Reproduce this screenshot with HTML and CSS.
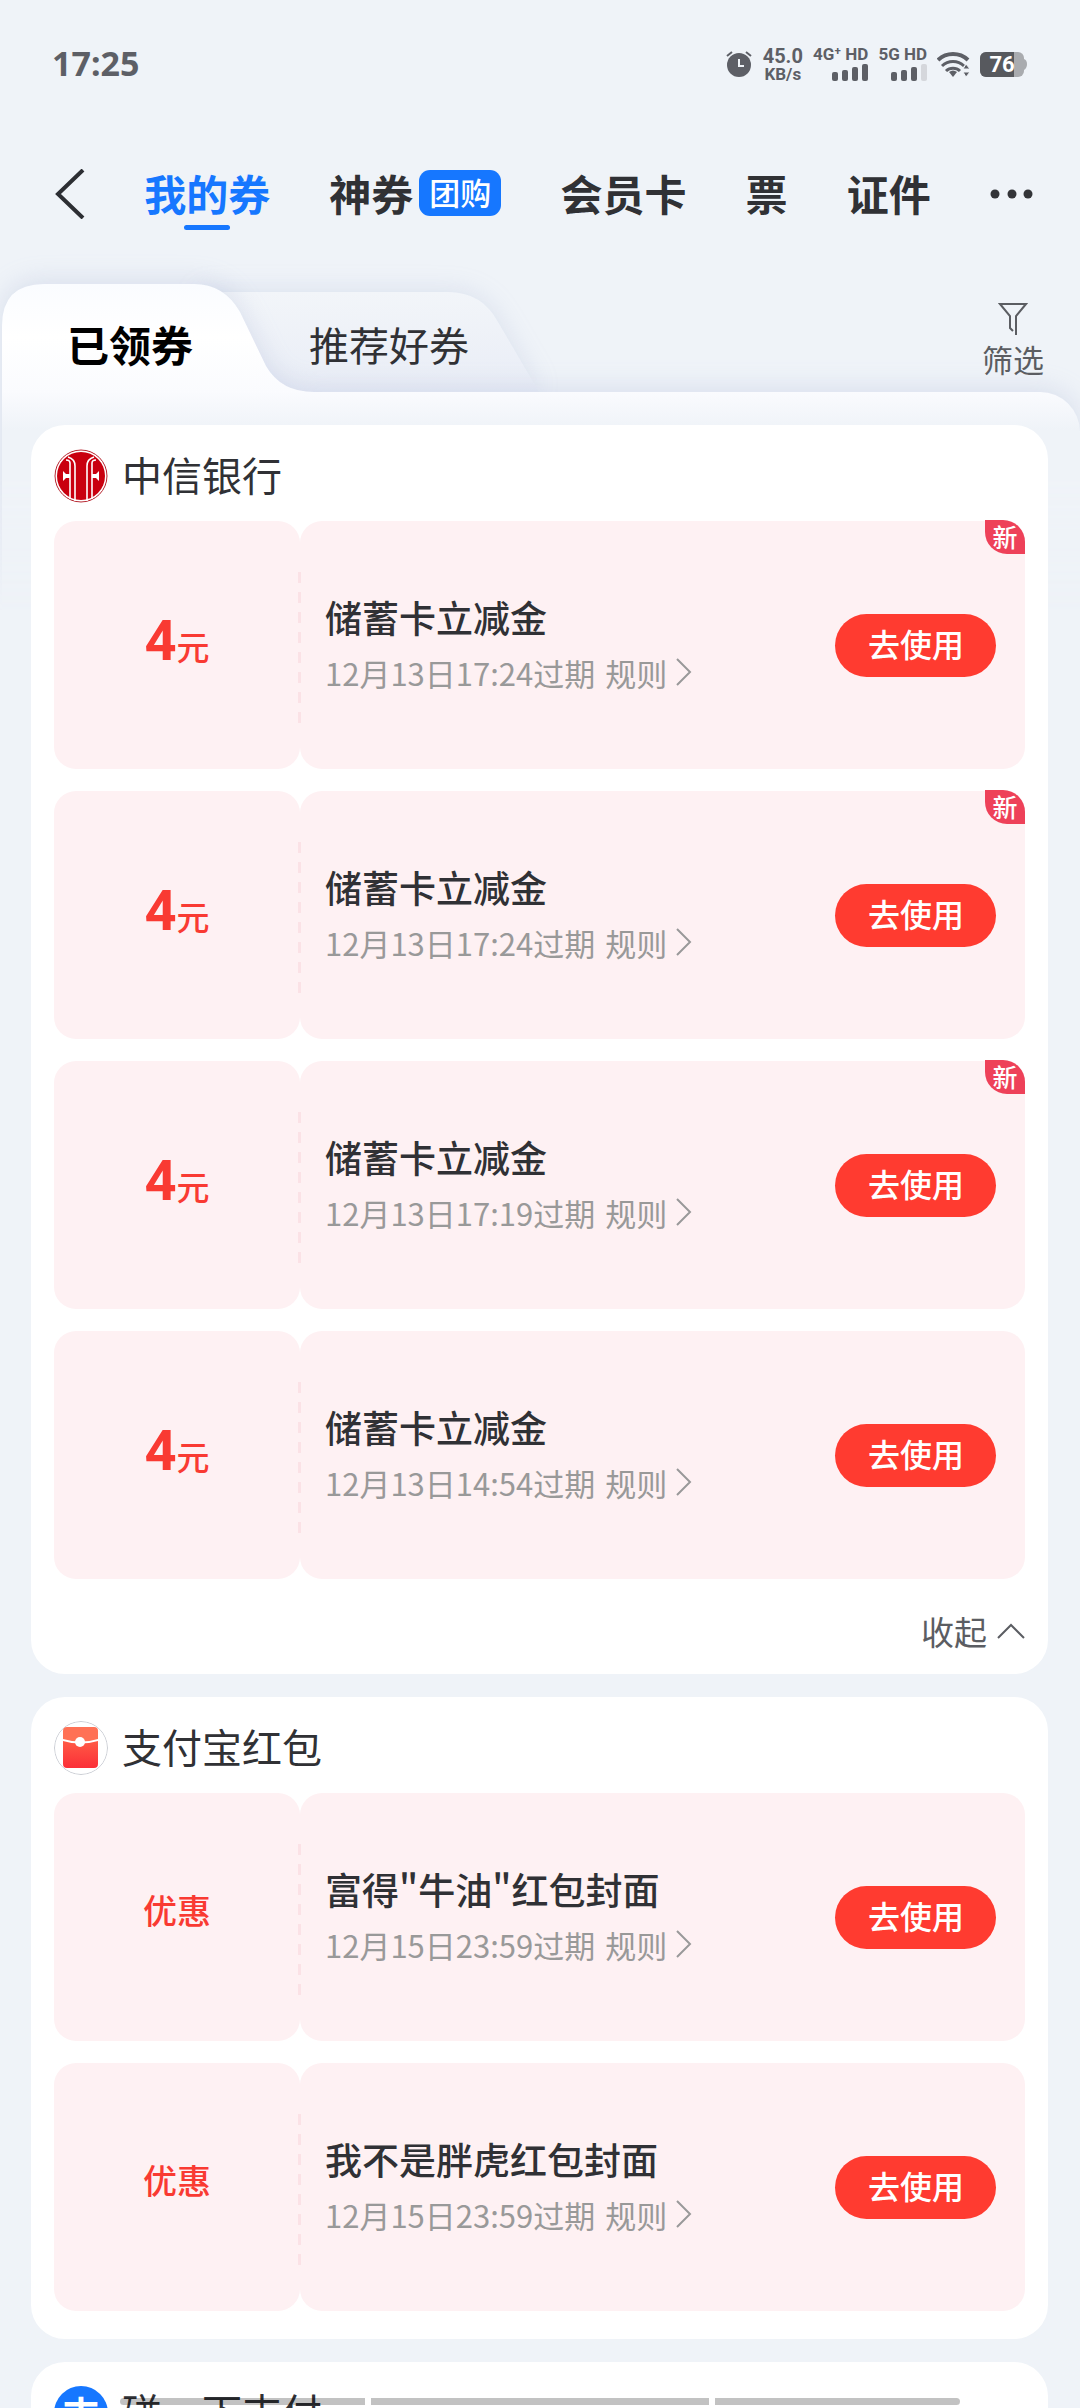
FILE: index.html
```html
<!DOCTYPE html>
<html lang="zh-CN">
<head>
  <meta charset="UTF-8">
  <meta name="viewport" content="width=device-width, initial-scale=1">
  <title>我的券</title>
  <link rel="stylesheet" href="styles.css">
</head>
<body>
  <svg class="defs" width="0" height="0" aria-hidden="true">
    <symbol id="arrow-right" viewBox="0 0 16 30">
      <path d="M1 2l13 13L1 28" fill="none" stroke="currentColor" stroke-width="2"/>
    </symbol>
  </svg>

  <div class="screen">
    <div class="status-bar">
      <span class="clock">17:25</span>
      <div class="status-icons">
        <svg class="alarm" width="27" height="26" viewBox="0 0 27 26">
          <circle cx="13" cy="14" r="12" fill="#5d5f66"/>
          <path d="M1 5l5-4M20 1l5 4" stroke="#5d5f66" stroke-width="2"/>
          <path d="M13 8v7h5" fill="none" stroke="#eff3f8" stroke-width="2"/>
        </svg>
        <div class="net-speed"><span class="speed">45.0</span><span>KB/s</span></div>
        <div class="signal">
          <span>4G⁺ HD</span>
          <svg width="36" height="17" viewBox="0 0 36 17" fill="#5d5f66">
            <rect x="0" y="8" width="6" height="9" rx="2"/>
            <rect x="10" y="6" width="6" height="11" rx="2"/>
            <rect x="20" y="3" width="6" height="14" rx="2"/>
            <rect x="30" y="0" width="6" height="17" rx="2"/>
          </svg>
        </div>
        <div class="signal">
          <span>5G HD</span>
          <svg width="36" height="17" viewBox="0 0 36 17" fill="#5d5f66">
            <rect x="0" y="8" width="6" height="9" rx="2"/>
            <rect x="10" y="6" width="6" height="11" rx="2"/>
            <rect x="20" y="3" width="6" height="14" rx="2"/>
            <rect x="30" y="0" width="6" height="17" rx="2" fill="#d5d7dc"/>
          </svg>
        </div>
        <svg class="wifi" width="33" height="26" viewBox="0 0 33 26">
          <g fill="none" stroke="#5d5f66" stroke-width="4">
            <path d="M1 9a22 22 0 0 1 30 0"/>
            <path d="M5 15a16 16 0 0 1 22 0" stroke-width="3"/>
            <path d="M9 20a10 10 0 0 1 14 0" stroke-width="3"/>
          </g>
          <path d="M12 21q4-3 8 0l-4 5z" fill="#5d5f66"/>
          <path d="M29 13l4 5h-7zM29 26l4-5h-7z" fill="#5d5f66" stroke="#eff3f8" stroke-width="1"/>
        </svg>
        <svg class="battery" width="47" height="25" viewBox="0 0 47 25">
          <rect x="0" y="0" width="44" height="25" rx="6" fill="#a9abaf"/>
          <path d="M6 0h28v25H6a6 6 0 0 1-6-6V6a6 6 0 0 1 6-6z" fill="#57595e"/>
          <path d="M44 7q3 1 3 5t-3 6z" fill="#a9abaf"/>
          <text x="22" y="20" text-anchor="middle" class="battery-text">76</text>
        </svg>
      </div>
    </div>

    <nav class="nav">
      <button class="icon-btn" aria-label="返回">
        <svg width="30" height="50" viewBox="0 0 30 50">
          <path d="M28 1L3 25l25 24" fill="none" stroke="#2c2e33" stroke-width="4"/>
        </svg>
      </button>
      <a class="nav-link active" href="#">我的券</a>
      <a class="nav-link" href="#">神券<span class="nav-tag">团购</span></a>
      <a class="nav-link" href="#">会员卡</a>
      <a class="nav-link" href="#">票</a>
      <a class="nav-link" href="#">证件</a>
      <button class="icon-btn" aria-label="更多">
        <svg width="43" height="10" viewBox="0 0 43 10" fill="#333438">
          <circle cx="5" cy="5" r="4.5"/><circle cx="22" cy="5" r="4.5"/><circle cx="38" cy="5" r="4.5"/>
        </svg>
      </button>
    </nav>

    <div class="tabs">
      <svg class="tab-back" width="560" height="108" viewBox="0 0 560 108" aria-hidden="true">
        <defs>
          <linearGradient id="backFill" x1="0" y1="0" x2="0" y2="1">
            <stop offset="0" stop-color="#f2f5f9"/>
            <stop offset="1" stop-color="#e9edf6"/>
          </linearGradient>
        </defs>
        <path d="M200 8H448Q482 8 498 38L539 108H200z" fill="url(#backFill)"/>
      </svg>
      <div class="tab-front" aria-hidden="true">
        <svg width="330" height="109" viewBox="0 0 330 109">
          <defs>
            <linearGradient id="frontFill" x1="0" y1="0" x2="0" y2="1">
              <stop offset="0" stop-color="#fafcff"/>
              <stop offset=".5" stop-color="#ffffff"/>
              <stop offset="1" stop-color="#fafbfe"/>
            </linearGradient>
          </defs>
          <path d="M0 109V42Q0 0 42 0H192Q222 0 238 28L264 82Q279 108 312 108V109z" fill="url(#frontFill)"/>
        </svg>
        <div class="tab-sheet"></div>
      </div>
      <button class="tab current">已领券</button>
      <button class="tab">推荐好券</button>
      <button class="filter">
        <svg width="30" height="34" viewBox="0 0 30 34">
          <path d="M18 33V14L28 2H2l10 12v12l3 3" fill="none" stroke="#5b5d62" stroke-width="2"/>
        </svg>
        筛选
      </button>
    </div>

    <main class="list">
      <section class="card">
        <header class="card-head">
          <svg class="logo" width="54" height="54" viewBox="0 0 54 54">
            <circle cx="27" cy="27" r="26" fill="#fff" stroke="#b5222c" stroke-width="1"/>
            <circle cx="27" cy="27" r="24" fill="#c9000f"/>
            <g fill="none" stroke="#fff" stroke-width="1.6">
              <path d="M16 50V14q0-3-4-3"/>
              <path d="M21 52V17q0-7-7-9"/>
              <path d="M38 50V14q0-3 4-3"/>
              <path d="M33 52V17q0-7 7-9"/>
            </g>
            <path d="M9 22l3 3h4v4h-4l-3 3zM45 22l-3 3h-4v4h4l3 3z" fill="#fff"/>
          </svg>
          <h2>中信银行</h2>
        </header>
        <div class="coupons">
          <article class="coupon">
            <div class="coupon-value amount"><p><b>4</b>元</p></div>
            <div class="coupon-body">
              <div class="coupon-info">
                <h3>储蓄卡立减金</h3>
                <p>12月13日17:24过期 <a href="#">规则<svg width="16" height="30"><use href="#arrow-right"/></svg></a></p>
              </div>
              <button class="use-btn">去使用</button>
            </div>
            <span class="new-tag">新</span>
          </article>
          <article class="coupon">
            <div class="coupon-value amount"><p><b>4</b>元</p></div>
            <div class="coupon-body">
              <div class="coupon-info">
                <h3>储蓄卡立减金</h3>
                <p>12月13日17:24过期 <a href="#">规则<svg width="16" height="30"><use href="#arrow-right"/></svg></a></p>
              </div>
              <button class="use-btn">去使用</button>
            </div>
            <span class="new-tag">新</span>
          </article>
          <article class="coupon">
            <div class="coupon-value amount"><p><b>4</b>元</p></div>
            <div class="coupon-body">
              <div class="coupon-info">
                <h3>储蓄卡立减金</h3>
                <p>12月13日17:19过期 <a href="#">规则<svg width="16" height="30"><use href="#arrow-right"/></svg></a></p>
              </div>
              <button class="use-btn">去使用</button>
            </div>
            <span class="new-tag">新</span>
          </article>
          <article class="coupon">
            <div class="coupon-value amount"><p><b>4</b>元</p></div>
            <div class="coupon-body">
              <div class="coupon-info">
                <h3>储蓄卡立减金</h3>
                <p>12月13日14:54过期 <a href="#">规则<svg width="16" height="30"><use href="#arrow-right"/></svg></a></p>
              </div>
              <button class="use-btn">去使用</button>
            </div>
          </article>
        </div>
        <button class="collapse">
          收起
          <svg width="28" height="16" viewBox="0 0 28 16">
            <path d="M1 15L14 2l13 13" fill="none" stroke="#5b5d62" stroke-width="2"/>
          </svg>
        </button>
      </section>

      <section class="card">
        <header class="card-head">
          <svg class="logo" width="54" height="54" viewBox="0 0 54 54">
            <defs>
              <linearGradient id="packet" x1="0" y1="0" x2="0" y2="1">
                <stop offset="0" stop-color="#ff5a45"/>
                <stop offset="1" stop-color="#fb2f38"/>
              </linearGradient>
            </defs>
            <circle cx="27" cy="27" r="26.5" fill="#fff" stroke="#c9ccd3"/>
            <path d="M9 20q17 5 35 0v23q0 4-4 4H13q-4 0-4-4z" fill="url(#packet)"/>
            <path d="M9 18v-8q0-4 4-4h27q4 0 4 4v8q-17 5-35 0z" fill="#ff7155"/>
            <circle cx="26" cy="21" r="5" fill="#fff"/>
          </svg>
          <h2>支付宝红包</h2>
        </header>
        <div class="coupons">
          <article class="coupon">
            <div class="coupon-value"><p>优惠</p></div>
            <div class="coupon-body">
              <div class="coupon-info">
                <h3>富得"牛油"红包封面</h3>
                <p>12月15日23:59过期 <a href="#">规则<svg width="16" height="30"><use href="#arrow-right"/></svg></a></p>
              </div>
              <button class="use-btn">去使用</button>
            </div>
          </article>
          <article class="coupon">
            <div class="coupon-value"><p>优惠</p></div>
            <div class="coupon-body">
              <div class="coupon-info">
                <h3>我不是胖虎红包封面</h3>
                <p>12月15日23:59过期 <a href="#">规则<svg width="16" height="30"><use href="#arrow-right"/></svg></a></p>
              </div>
              <button class="use-btn">去使用</button>
            </div>
          </article>
        </div>
      </section>

      <section class="card">
        <header class="card-head">
          <span class="logo alipay">支</span>
          <h2>碰一下支付</h2>
        </header>
      </section>
    </main>

    <div class="gesture-bar"><i></i><i></i><i></i></div>
  </div>
</body>
</html>
```

FILE: styles.css
```css
* {
  box-sizing: border-box;
}
body {
  margin: 0;
  background: #eff3f8;
  color: #303135;
  font-family: "Noto Sans CJK SC", sans-serif;
}
h2, h3, p {
  margin: 0;
}
a {
  color: inherit;
  text-decoration: none;
}
button {
  padding: 0;
  border: none;
  background: none;
  color: inherit;
  font-family: inherit;
}
svg {
  display: block;
  flex: none;
}
.defs {
  position: absolute;
}
.screen {
  position: relative;
  height: 100vh;
  overflow: hidden;
}

/* status bar */
.status-bar {
  display: flex;
  justify-content: space-between;
  align-items: center;
  height: 128px;
  padding: 0 53px 0 52px;
  color: #5d5f66;
  font-weight: 700;
}
.clock {
  padding-bottom: 2px;
  font-family: "Noto Sans", sans-serif;
  font-size: 34px;
}
.status-icons {
  display: flex;
  align-items: center;
  gap: 10px;
  font-family: Roboto, sans-serif;
}
.net-speed {
  display: flex;
  flex-direction: column;
  align-items: center;
  font-size: 17px;
  line-height: 16px;
}
.speed {
  font-size: 20px;
  line-height: 20px;
}
.signal {
  display: flex;
  flex-direction: column;
  align-items: flex-end;
  gap: 2px;
  padding-bottom: 2px;
  font-size: 17px;
  line-height: 16px;
}
.battery-text {
  font-size: 22px;
  fill: #fff;
}

/* top navigation */
.nav {
  display: flex;
  justify-content: space-between;
  align-items: center;
  height: 132px;
  padding: 0 47px 0 55px;
}
.nav-link {
  position: relative;
  display: flex;
  align-items: center;
  gap: 6px;
  padding-bottom: 2px;
  font-size: 42px;
  line-height: 60px;
  font-weight: 700;
}
.nav-link.active {
  color: #1677ff;
}
.nav-link.active::after {
  content: "";
  position: absolute;
  left: 50%;
  bottom: -5px;
  width: 46px;
  height: 5px;
  margin-left: -23px;
  border-radius: 3px;
  background: #1677ff;
}
.nav-tag {
  height: 46px;
  padding: 0 10px;
  border-radius: 11px;
  background: #1677ff;
  color: #fff;
  font-size: 31px;
  line-height: 44px;
  font-weight: 500;
}

/* folder style tabs */
.tabs {
  position: relative;
  display: flex;
  align-items: center;
  height: 108px;
  margin-top: 24px;
  padding: 0 36px 0 67px;
}
.tab-back {
  position: absolute;
  top: 0;
  left: 0;
  filter: drop-shadow(0 -2px 12px rgba(140, 156, 200, 0.2));
}
.tab-front {
  position: absolute;
  top: -40px;
  left: 0;
  right: 0;
  padding: 40px 0 0 2px;
  filter: drop-shadow(0 -4px 12px rgba(140, 156, 200, 0.22));
  mask-image: linear-gradient(#000 60%, transparent 95%);
}
.tab-sheet {
  height: 240px;
  margin-top: -1px;
  border-radius: 0 40px 0 0;
  background: linear-gradient(#fafbfe, #eff3f8 38px);
}
.tab {
  position: relative;
  margin-top: 12px;
  font-size: 40px;
  line-height: 60px;
}
.tab.current {
  margin-right: 116px;
  color: #000;
  font-size: 42px;
  font-weight: 700;
}
.filter {
  position: relative;
  display: flex;
  flex-direction: column;
  align-items: center;
  gap: 1px;
  margin: 6px 0 0 auto;
  color: #5b5d62;
  font-size: 31px;
  line-height: 44px;
}

/* cards */
.list {
  position: relative;
  display: flex;
  flex-direction: column;
  gap: 23px;
  padding: 33px 32px 0 31px;
}
.card {
  padding: 0 23px 28px;
  border-radius: 34px;
  background: #fff;
}
.card-head {
  display: flex;
  align-items: center;
  gap: 14px;
  height: 96px;
  padding-top: 6px;
}
.card-head h2 {
  padding-bottom: 4px;
  font-size: 40px;
  line-height: 54px;
  font-weight: 400;
}
.logo {
  width: 54px;
  height: 54px;
  border-radius: 50%;
}
.alipay {
  background: #1677ff;
  color: #fff;
  font-size: 38px;
  line-height: 54px;
  font-weight: 700;
  text-align: center;
}
.coupons {
  display: flex;
  flex-direction: column;
  gap: 22px;
}
.coupon {
  position: relative;
  display: flex;
  height: 248px;
}
.coupon-value,
.coupon-body {
  display: flex;
  align-items: center;
  border-radius: 22px;
  background: #fef1f3;
}
.coupon-value {
  width: 246px;
  justify-content: center;
  padding-bottom: 14px;
  color: #f93a32;
  font-size: 34px;
  line-height: 60px;
  font-weight: 500;
}
.coupon-value.amount {
  padding-bottom: 4px;
  font-size: 33px;
}
.coupon-value b {
  font-family: Roboto, sans-serif;
  font-size: 56px;
  font-weight: 700;
}
.coupon-body {
  flex: 1;
  justify-content: space-between;
  padding: 0 29px 0 25px;
}
/* tear line between the two halves */
.coupon-body::before {
  content: "";
  position: absolute;
  top: 51px;
  left: 244px;
  width: 3px;
  height: 153px;
  background: repeating-linear-gradient(#fbe2e6 0 11px, transparent 11px 20px);
}
.coupon-info {
  padding-bottom: 1px;
}
.coupon-info h3 {
  font-size: 37px;
  line-height: 55px;
  font-weight: 500;
}
.coupon-info p {
  display: flex;
  align-items: center;
  gap: 10px;
  color: #999;
  font-size: 31px;
  line-height: 55px;
  font-weight: 400;
}
.coupon-info a {
  display: flex;
  align-items: center;
  gap: 9px;
}
.use-btn {
  height: 63px;
  padding: 0 32px 4px 33px;
  border-radius: 32px;
  background: #ff3b30;
  color: #fff;
  font-size: 32px;
  line-height: 56px;
  font-weight: 500;
}
.new-tag {
  position: absolute;
  top: -1px;
  right: 0;
  width: 40px;
  height: 34px;
  border-radius: 0 22px 0 22px;
  background: #ee4159;
  color: #fff;
  font-size: 25px;
  line-height: 32px;
  font-weight: 500;
  text-align: center;
}
.collapse {
  display: flex;
  align-items: center;
  gap: 10px;
  margin: 30px 0 -7px auto;
  color: #5b5d62;
  font-size: 33px;
  line-height: 44px;
}

/* system gesture hint */
.gesture-bar {
  position: absolute;
  left: 120px;
  right: 120px;
  bottom: 3px;
  display: grid;
  grid-template-columns: 245fr 338fr 245fr;
  gap: 6px;
  height: 7px;
  border-radius: 4px;
  overflow: hidden;
}
.gesture-bar i {
  background: rgba(0, 0, 0, 0.24);
}
```
